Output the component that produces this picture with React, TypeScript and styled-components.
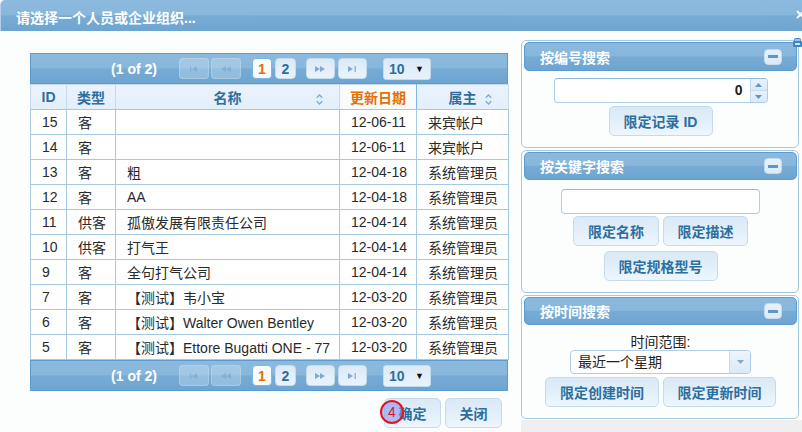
import React from "react";
import styled, { createGlobalStyle } from "styled-components";

const FONT = `"Liberation Sans", "Noto Sans CJK SC", sans-serif`;

const Global = createGlobalStyle`
  html, body { margin: 0; padding: 0; background: #fcfdfd; }
  body { font-family: ${FONT}; font-size: 14px; color: #222; }
  * { box-sizing: border-box; }
`;

const gloss = `linear-gradient(180deg, #8cbade 0%, #88b7dc 47%, #76abd4 52%, #6ea5d0 100%)`;

const Dialog = styled.div`
  position: relative;
  width: 802px;
  height: 432px;
  overflow: hidden;
  display: flex;
  flex-direction: column;
  background: #fcfdfd;
`;

const TitleBar = styled.div`
  flex: none;
  height: 31px;
  background: ${gloss};
  border-top-left-radius: 5px;
  border-left: 1px solid #b3d0e8;
  display: flex;
  align-items: center;
  padding: 2px 0 0 15px;
  color: #fff;
  font-weight: bold;
  font-size: 14px;
`;

const CloseIcon = styled.svg`
  position: absolute;
  left: 796px;
  top: 10px;
`;

const ResizeIcon = styled.svg`
  position: absolute;
  left: 793px;
  top: 38px;
`;

const Main = styled.div`
  flex: 1;
  display: flex;
  min-height: 0;
`;

const LeftCol = styled.div`
  flex: none;
  width: 508px;
  padding: 22px 0 0 30px;
  display: flex;
  flex-direction: column;
`;

const RightCol = styled.div`
  flex: none;
  margin-left: 13px;
  width: 281px;
  padding-top: 9px;
  display: flex;
  flex-direction: column;
`;

const Filler = styled.div`
  flex: 1;
  margin-top: 1px;
  background: #efefef;
`;

/* ---------- paginator ---------- */

const Pager = styled.div`
  flex: none;
  height: 31px;
  width: 478px;
  background: ${gloss};
  border: 1px solid #5a9ccf;
  display: flex;
  align-items: center;
  justify-content: center;
  padding-left: 4px;
  color: #fff;
  font-weight: bold;
  font-size: 14px;
`;

const PagerText = styled.span`
  margin-right: 22px;
`;

const PgBtn = styled.span<{ $w: number; $ml?: number; $state?: "disabled" | "active" | "default" }>`
  width: ${(p) => p.$w}px;
  height: 21px;
  margin-left: ${(p) => p.$ml ?? 0}px;
  border-radius: 4px;
  display: flex;
  align-items: center;
  justify-content: center;
  font-weight: bold;
  font-size: 14px;
  border: 1px solid
    ${(p) =>
      p.$state === "active" ? "#79b7e7" : p.$state === "disabled" ? "rgba(197,219,236,0.45)" : "#c5dbec"};
  background: ${(p) =>
    p.$state === "active"
      ? "#f8fafb"
      : p.$state === "disabled"
      ? "rgba(223,239,252,0.3)"
      : "linear-gradient(180deg, #dbeaf7, #eaf3fc)"};
  color: ${(p) => (p.$state === "active" ? "#e17009" : "#2e6e9e")};
  & svg {
    opacity: ${(p) => (p.$state === "disabled" ? 0.45 : 1)};
  }
`;

const RowsSelect = styled.span`
  margin-left: 16px;
  width: 48px;
  height: 22px;
  border: 1px solid #c5dbec;
  border-radius: 3px;
  background: linear-gradient(180deg, #dceaf7, #e8f2fb);
  display: flex;
  align-items: center;
  justify-content: space-between;
  padding: 0 6px 0 5px;
  color: #2e6e9e;
  font-weight: bold;
  font-size: 14px;
`;

const Caret = styled.span`
  color: #111;
  font-size: 9px;
`;

const IconFirst = () => (
  <svg width="8" height="6" viewBox="0 0 8 6">
    <rect x="0" y="0" width="1.2" height="6" fill="#6b9cc6" />
    <path d="M7 0 L2 3 L7 6 Z" fill="#6b9cc6" />
  </svg>
);
const IconPrev = () => (
  <svg width="10" height="6" viewBox="0 0 10 6">
    <path d="M5 0 L0 3 L5 6 Z M10 0 L5 3 L10 6 Z" fill="#6b9cc6" />
  </svg>
);
const IconNext = () => (
  <svg width="10" height="6" viewBox="0 0 10 6">
    <path d="M0 0 L5 3 L0 6 Z M5 0 L10 3 L5 6 Z" fill="#7fa9cf" />
  </svg>
);
const IconLast = () => (
  <svg width="8" height="6" viewBox="0 0 8 6">
    <path d="M0 0 L5 3 L0 6 Z" fill="#7fa9cf" />
    <rect x="6.6" y="0" width="1.2" height="6" fill="#7fa9cf" />
  </svg>
);

const Paginator = () => (
  <Pager>
    <PagerText>(1 of 2)</PagerText>
    <PgBtn $w={30} $state="disabled">
      <IconFirst />
    </PgBtn>
    <PgBtn $w={30} $ml={2} $state="disabled">
      <IconPrev />
    </PgBtn>
    <PgBtn $w={20} $ml={11} $state="active">
      1
    </PgBtn>
    <PgBtn $w={21} $ml={3} $state="default">
      2
    </PgBtn>
    <PgBtn $w={29} $ml={10} $state="default">
      <IconNext />
    </PgBtn>
    <PgBtn $w={29} $ml={3} $state="default">
      <IconLast />
    </PgBtn>
    <RowsSelect>
      10<Caret>▼</Caret>
    </RowsSelect>
  </Pager>
);

/* ---------- table ---------- */

const Grid = styled.table`
  flex: none;
  width: 478px;
  border-collapse: collapse;
  table-layout: fixed;
  background: #fff;
`;

const Th = styled.th<{ $active?: boolean }>`
  position: relative;
  height: 25px;
  padding: 0;
  text-align: center;
  font-weight: bold;
  font-size: 14px;
  color: ${(p) => (p.$active ? "#e17009" : "#2e6e9e")};
  background: ${(p) => (p.$active ? "#f8fafb" : "linear-gradient(180deg, #eaf3fc, #e2eefa)")};
  border-top: 1px solid #c5dbec;
  border-bottom: 1px solid #a6c9e2;
  border-left: 1px solid ${(p) => (p.$active ? "#79b7e7" : "#c5dbec")};
  border-right: 1px solid ${(p) => (p.$active ? "#79b7e7" : "#c5dbec")};
`;

const SortIcon = styled.svg`
  position: absolute;
  right: 16px;
  top: 9px;
`;

const ActiveSort = styled.svg`
  position: absolute;
  right: 16px;
  top: 13px;
`;

const Td = styled.td`
  height: 25px;
  padding: 0 0 0 11px;
  border: 1px solid #a6c9e2;
  font-size: 14px;
  color: #2a2a2a;
  white-space: nowrap;
  overflow: hidden;
`;

const Sort = () => (
  <SortIcon width="7" height="11" viewBox="0 0 7 11">
    <path d="M0.8 3.8 L3.5 1 L6.2 3.8 M0.8 7.2 L3.5 10 L6.2 7.2" fill="none" stroke="#79acd6" strokeWidth="1.3" />
  </SortIcon>
);

const rows: [string, string, string, string, string][] = [
  ["15", "客", "", "12-06-11", "来宾帐户"],
  ["14", "客", "", "12-06-11", "来宾帐户"],
  ["13", "客", "粗", "12-04-18", "系统管理员"],
  ["12", "客", "AA", "12-04-18", "系统管理员"],
  ["11", "供客", "孤傲发展有限责任公司", "12-04-14", "系统管理员"],
  ["10", "供客", "打气王", "12-04-14", "系统管理员"],
  ["9", "客", "全句打气公司", "12-04-14", "系统管理员"],
  ["7", "客", "【测试】韦小宝", "12-03-20", "系统管理员"],
  ["6", "客", "【测试】Walter Owen Bentley", "12-03-20", "系统管理员"],
  ["5", "客", "【测试】Ettore Bugatti ONE - 77", "12-03-20", "系统管理员"],
];

const DataTable = () => (
  <Grid>
    <colgroup>
      <col style={{ width: 36 }} />
      <col style={{ width: 49 }} />
      <col style={{ width: 224 }} />
      <col style={{ width: 77 }} />
      <col style={{ width: 92 }} />
    </colgroup>
    <thead>
      <tr>
        <Th>ID</Th>
        <Th>类型</Th>
        <Th>
          名称
          <Sort />
        </Th>
        <Th $active>
          更新日期
          <ActiveSort width="5" height="4" viewBox="0 0 5 4">
            <path d="M0 0 L5 0 L2.5 4 Z" fill="#f0a020" />
          </ActiveSort>
        </Th>
        <Th>
          属主
          <Sort />
        </Th>
      </tr>
    </thead>
    <tbody>
      {rows.map((r) => (
        <tr key={r[0]}>
          {r.map((c, i) => (
            <Td key={i}>{c}</Td>
          ))}
        </tr>
      ))}
    </tbody>
  </Grid>
);

/* ---------- buttons ---------- */

const UiButton = styled.button<{ $w: number; $mt?: number }>`
  position: relative;
  flex: none;
  width: ${(p) => p.$w}px;
  height: 30px;
  margin-top: ${(p) => p.$mt ?? 0}px;
  padding: 0;
  border: 1px solid #c5dbec;
  border-radius: 5px;
  background: linear-gradient(180deg, #d9e9f6 0%, #e2eff9 50%, #eef6fd 100%);
  color: #2e6e9e;
  font-family: ${FONT};
  font-weight: bold;
  font-size: 14px;
  cursor: pointer;
`;

const ActionRow = styled.div`
  flex: none;
  width: 478px;
  margin-top: 7px;
  padding-right: 6px;
  display: flex;
  justify-content: flex-end;
  gap: 4px;
`;

const Badge = styled.span`
  position: absolute;
  left: -5px;
  top: 1px;
  width: 24px;
  height: 24px;
  border-radius: 50%;
  border: 2px solid #e3141e;
  background: rgba(120, 145, 245, 0.55);
  color: #e3141e;
  font-weight: normal;
  font-size: 14px;
  display: flex;
  align-items: center;
  justify-content: center;
`;

/* ---------- right panels ---------- */

const Panel = styled.section`
  flex: none;
  width: 278px;
  border: 1px solid #a6c9e2;
  border-radius: 5px;
  background: #fcfdfd;
  padding: 1px 1px 11px 2px;
  display: flex;
  flex-direction: column;
  align-items: center;
  & + & {
    margin-top: 2px;
  }
`;

const PanelHeader = styled.div<{ $h: number }>`
  flex: none;
  align-self: stretch;
  height: ${(p) => p.$h}px;
  border: 1px solid #5a9ccf;
  border-radius: 5px;
  background: ${gloss};
  display: flex;
  align-items: center;
  justify-content: space-between;
  padding: 0 14px 0 15px;
  color: #fff;
  font-weight: bold;
  font-size: 14px;
`;

const Toggle = styled.span`
  width: 18px;
  height: 16px;
  border-radius: 4px;
  border: 1px solid #c5dbec;
  background: linear-gradient(180deg, #e6f1fb, #dbeaf7);
  display: flex;
  align-items: center;
  justify-content: center;
  &::after {
    content: "";
    width: 10px;
    height: 3px;
    background: #5e96c6;
  }
`;

const Spinner = styled.div`
  flex: none;
  margin-top: 7px;
  width: 214px;
  height: 25px;
  border: 1px solid #aecde6;
  border-top-color: #8dbbe0;
  border-radius: 4px;
  background: #fff;
  display: flex;
  overflow: hidden;
`;

const SpinValue = styled.span`
  flex: 1;
  text-align: right;
  padding-right: 7px;
  font-weight: bold;
  line-height: 23px;
  color: #222;
`;

const SpinButtons = styled.span`
  width: 17px;
  border-left: 1px solid #c5dbec;
  display: flex;
  flex-direction: column;
`;

const SpinHalf = styled.span`
  flex: 1;
  display: flex;
  align-items: center;
  justify-content: center;
  background: linear-gradient(180deg, #e6f1fb, #dbeaf7);
  & + & {
    border-top: 1px solid #c5dbec;
  }
`;

const TextBox = styled.div`
  flex: none;
  margin-top: 9px;
  width: 199px;
  height: 25px;
  border: 1px solid #aecde6;
  border-top-color: #8dbbe0;
  border-radius: 4px;
  background: #fff;
`;

const BtnRow = styled.div<{ $mt: number }>`
  flex: none;
  margin-top: ${(p) => p.$mt}px;
  display: flex;
  gap: 4px;
`;

const Label = styled.div`
  flex: none;
  margin-top: 9px;
  line-height: 16px;
  height: 16px;
  font-size: 14px;
  color: #222;
`;

const Select = styled.div`
  flex: none;
  width: 181px;
  height: 24px;
  border: 1px solid #aecde6;
  border-radius: 4px;
  background: #fff;
  display: flex;
  overflow: hidden;
`;

const SelectText = styled.span`
  flex: 1;
  padding-left: 7px;
  line-height: 22px;
  font-size: 14px;
  color: #222;
`;

const SelectTrigger = styled.span`
  width: 21px;
  border-left: 1px solid #c5dbec;
  background: linear-gradient(180deg, #eef5fb, #dde9f4);
  display: flex;
  align-items: center;
  justify-content: center;
`;

const Tri = ({ up, color = "#5e96c6" }: { up?: boolean; color?: string }) => (
  <svg width="7" height="4" viewBox="0 0 7 4">
    <path d={up ? "M0 4 L3.5 0 L7 4 Z" : "M0 0 L7 0 L3.5 4 Z"} fill={color} />
  </svg>
);

export default function App() {
  return (
    <>
      <Global />
      <Dialog>
        <TitleBar>请选择一个人员或企业组织...</TitleBar>
        <CloseIcon width="10" height="9" viewBox="0 0 10 9">
          <path d="M1 1 L8 8 M8 1 L1 8" stroke="#f4f8fc" strokeWidth="2" />
        </CloseIcon>
        <Main>
          <LeftCol>
            <Paginator />
            <DataTable />
            <Paginator />
            <ActionRow>
              <UiButton $w={57}>
                确定
                <Badge>4</Badge>
              </UiButton>
              <UiButton $w={57}>关闭</UiButton>
            </ActionRow>
          </LeftCol>
          <RightCol>
            <Panel>
              <PanelHeader $h={29}>
                按编号搜索
                <Toggle />
              </PanelHeader>
              <Spinner>
                <SpinValue>0</SpinValue>
                <SpinButtons>
                  <SpinHalf>
                    <Tri up />
                  </SpinHalf>
                  <SpinHalf>
                    <Tri />
                  </SpinHalf>
                </SpinButtons>
              </Spinner>
              <UiButton $w={104} $mt={3}>
                限定记录 ID
              </UiButton>
            </Panel>
            <Panel>
              <PanelHeader $h={28}>
                按关键字搜索
                <Toggle />
              </PanelHeader>
              <TextBox />
              <BtnRow $mt={2}>
                <UiButton $w={86}>限定名称</UiButton>
                <UiButton $w={85}>限定描述</UiButton>
              </BtnRow>
              <BtnRow $mt={5}>
                <UiButton $w={114}>限定规格型号</UiButton>
              </BtnRow>
            </Panel>
            <Panel>
              <PanelHeader $h={28}>
                按时间搜索
                <Toggle />
              </PanelHeader>
              <Label>时间范围:</Label>
              <Select>
                <SelectText>最近一个星期</SelectText>
                <SelectTrigger>
                  <Tri color="#7ea9cf" />
                </SelectTrigger>
              </Select>
              <BtnRow $mt={3}>
                <UiButton $w={114}>限定创建时间</UiButton>
                <UiButton $w={113}>限定更新时间</UiButton>
              </BtnRow>
            </Panel>
            <Filler />
          </RightCol>
        </Main>
        <ResizeIcon width="9" height="9" viewBox="0 0 9 9">
          <rect x="1.5" y="0.5" width="6" height="3" rx="1" fill="#9cc4e6" stroke="#3d86c6" />
          <rect x="0" y="3" width="9" height="6" rx="1" fill="#3d86c6" />
          <rect x="2" y="5" width="5" height="2" fill="#cfe3f4" />
        </ResizeIcon>
      </Dialog>
    </>
  );
}
